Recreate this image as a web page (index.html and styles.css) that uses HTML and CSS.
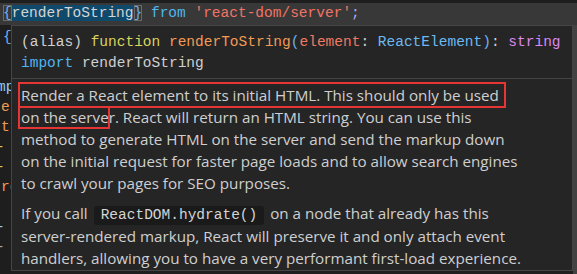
FILE: index.html
```html
<!DOCTYPE html>
<html lang="en">
<head>
    <meta charset="UTF-8">
    <title>renderToString hover</title>
    <link rel="stylesheet" href="styles.css">
</head>
<body>
    <div class="editor">
        <div class="line current">
            <span class="brace match">{</span><span class="sel">renderToString</span><span class="brace match">}</span> <span class="kw">from</span> <span class="str">'react-dom/server'</span><span class="semi">;</span>
        </div>

        <div class="code">
            <div class="line first"><span class="brace">{</span></div>
            <div class="line"></div>
            <div class="line shift-5"><span class="var">mport</span></div>
            <div class="line shift-1"><span class="fn">e</span>(</div>
            <div class="line shift-1"><span class="fn">t</span>(</div>
            <div class="line shift-6"><span class="yel">-</span></div>
            <div class="line shift-6"><span class="yel">-</span></div>
            <div class="line shift-1"><span class="fn">re</span></div>
            <div class="line"></div>
            <div class="line shift-6"><span class="var">-</span></div>
            <div class="line shift-6"><span class="dim">-</span></div>
        </div>

        <div class="scroll-edge"></div>

        <div class="hover">
            <div class="hover-signature">
                <div><span class="plain">(alias)</span> <span class="kw-fn">function</span> <span class="fn">renderToString</span><span class="brace">(</span><span class="param">element</span><span class="plain">:</span> <span class="type">ReactElement</span><span class="brace">)</span><span class="plain">:</span> <span class="prim">string</span></div>
                <div><span class="kw">import</span> <span class="plain">renderToString</span></div>
            </div>
            <div class="hover-docs">
                <p>Render a React element to its initial HTML. This should only be used<br>
                on the server. React will return an HTML string. You can use this<br>
                method to generate HTML on the server and send the markup down<br>
                on the initial request for faster page loads and to allow search engines<br>
                to crawl your pages for SEO purposes.</p>
                <p>If you call <code>ReactDOM.hydrate()</code> on a node that already has this<br>
                server-rendered markup, React will preserve it and only attach event<br>
                handlers, allowing you to have a very performant first-load experience.</p>
            </div>
            <div class="mark mark-line"></div>
            <div class="mark mark-word"></div>
        </div>
    </div>
</body>
</html>
```

FILE: styles.css
```css
* {
    margin: 0;
    padding: 0;
    box-sizing: border-box;
}

body {
    background-color: #1e1e1e;
    overflow: hidden;
}

.editor {
    position: relative;
    width: 577px;
    height: 274px;
    padding-top: 3px;
    background-color: #1e1e1e;
    font-family: 'Liberation Mono', 'DejaVu Sans Mono', monospace;
    font-size: 14.5px;
    color: #d4d4d4;
    overflow: hidden;
}

.line {
    height: 20px;
    line-height: 20px;
    padding-left: 3px;
    white-space: nowrap;
}

.line.current {
    height: 22px;
    line-height: 21px;
    background-color: #383838;
}

.line.first {
    height: 30px;
}

.code {
    padding-top: 2px;
}

.shift-1 { text-indent: -2px; }
.shift-5 { text-indent: -6px; }
.shift-6 { text-indent: -7px; }

.brace { color: #6cb0f5; }
.match { outline: 1px solid #6a6a6a; outline-offset: -1px; }
.sel { background-color: #0f4a6c; color: #d4d4d4; }
.kw { color: #4fb6f2; }
.str { color: #f07466; }
.semi { color: #a9a5f5; }
.var { color: #8fd0fa; }
.fn { color: #f29b55; }
.yel { color: #d9c45a; }
.dim { color: #aaaaaa; }
.plain { color: #d0d0d0; }
.kw-fn { color: #d8d45e; }
.param { color: #ef7a62; }
.type { color: #6cb9f0; }
.prim { color: #dc88ee; }

.scroll-edge {
    position: absolute;
    top: 25px;
    right: 0;
    bottom: 0;
    width: 4px;
    background-color: #424242;
}

.hover {
    position: absolute;
    left: 11px;
    top: 25px;
    width: 562px;
    height: 246px;
    background-color: #252526;
    border: 1px solid #454545;
}

.hover-signature {
    padding: 6px 9px 4px;
    line-height: 21px;
    white-space: nowrap;
    border-bottom: 1px solid #454545;
}

.hover-docs {
    padding: 5px 9px 0;
    font-family: 'Open Sans', 'Noto Sans', sans-serif;
    font-size: 15.2px;
    line-height: 22px;
    color: #cfcfcf;
}

.hover-docs p + p {
    margin-top: 8px;
}

.hover-docs code {
    display: inline-block;
    margin: 0 2px;
    padding: 0 7px;
    line-height: 19px;
    font-family: 'Liberation Mono', monospace;
    font-size: 14.5px;
    color: #d4d4d4;
    background-color: #1a1a1a;
    border-radius: 3px;
}

.mark {
    position: absolute;
    border: 2px solid #e53535;
}

.mark-line {
    left: 6px;
    top: 56px;
    width: 488px;
    height: 26px;
}

.mark-word {
    left: 6px;
    top: 80px;
    width: 92px;
    height: 23px;
}
```
